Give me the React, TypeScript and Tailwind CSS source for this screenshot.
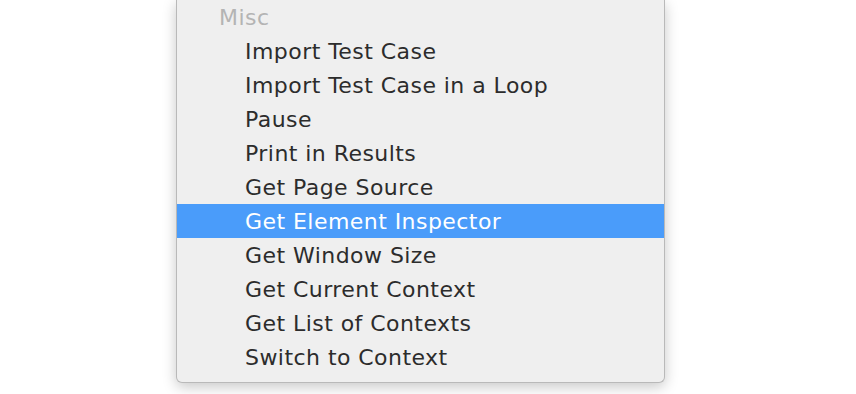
import React from "react";

const items = [
  "Import Test Case",
  "Import Test Case in a Loop",
  "Pause",
  "Print in Results",
  "Get Page Source",
  "Get Element Inspector",
  "Get Window Size",
  "Get Current Context",
  "Get List of Contexts",
  "Switch to Context",
];

export default function App() {
  return (
    <div
      className="w-[856px] h-[394px] bg-white overflow-hidden"
      style={{ fontFamily: '"DejaVu Sans", sans-serif' }}
    >
      <div className="ml-[176px] w-[489px] bg-[#efefef] border-x border-b border-[#b9b9b9] rounded-b-[6px] shadow-[0_4px_14px_rgba(0,0,0,0.22)] pb-[8px]">
        <div className="h-[34px] flex items-center pl-[42px] text-[22px] tracking-[0.45px] text-[#b4b4b4]">
          Misc
        </div>
        {items.map((t) => {
          const sel = t === "Get Element Inspector";
          return (
            <div
              key={t}
              className={
                sel
                  ? "h-[34px] flex items-center pl-[68px] text-[22px] tracking-[0.45px] bg-[#4a9cfa] text-white"
                  : "h-[34px] flex items-center pl-[68px] text-[22px] tracking-[0.45px] text-[#2c2c2c]"
              }
            >
              {t}
            </div>
          );
        })}
      </div>
    </div>
  );
}
